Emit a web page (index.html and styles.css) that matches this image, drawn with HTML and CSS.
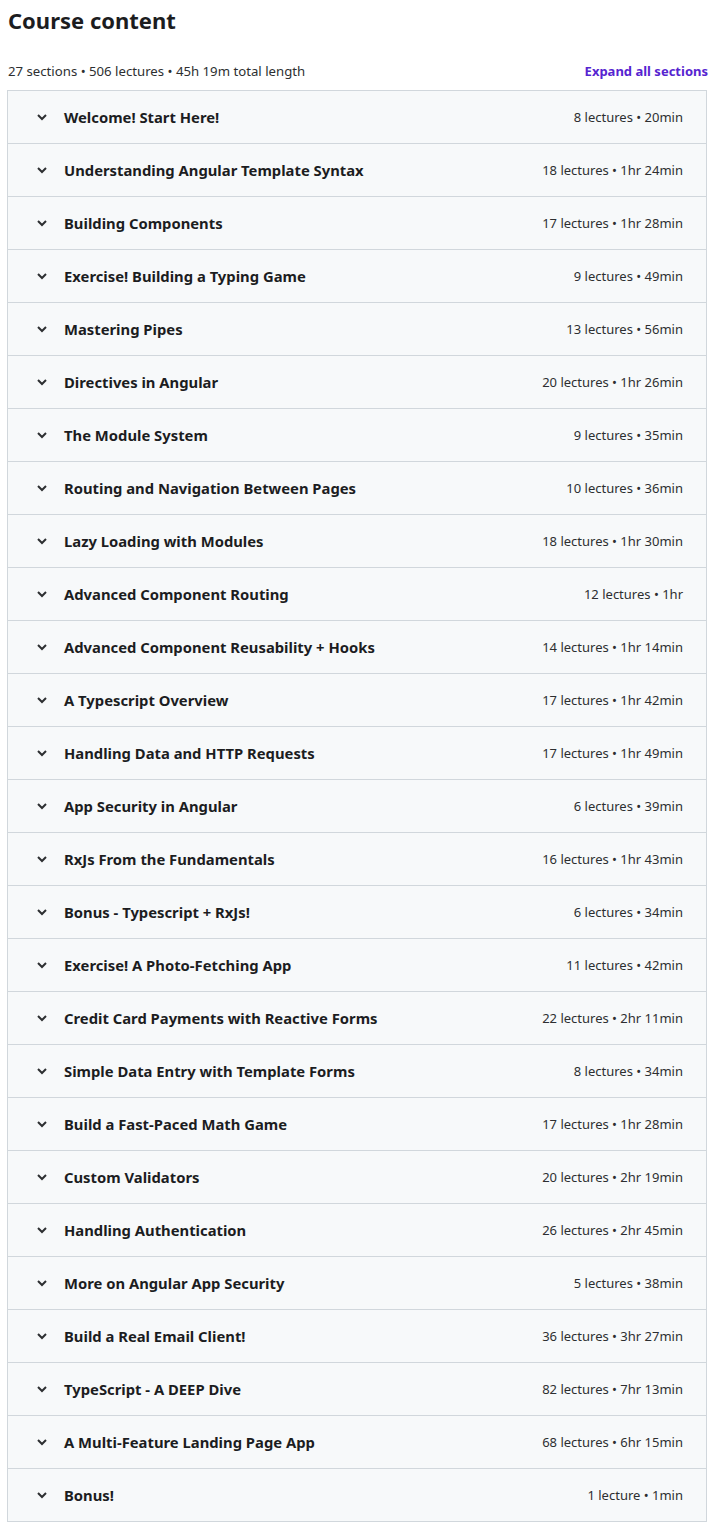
FILE: index.html
```html
<!DOCTYPE html>
<html lang="en">
<head>
    <meta charset="UTF-8">
    <title>Course content</title>
    <link rel="stylesheet" href="styles.css">
</head>
<body>
    <div class="curriculum">
        <h2 class="curriculum-title">Course content</h2>
        <div class="curriculum-summary">
            <span>27 sections • 506 lectures • 45h 19m total length</span>
            <a href="#" class="expand-link">Expand all sections</a>
        </div>
        <div class="section-list" id="section-list"></div>
    </div>
    <script>
        const sections = [
            ['Welcome! Start Here!', '8 lectures • 20min'],
            ['Understanding Angular Template Syntax', '18 lectures • 1hr 24min'],
            ['Building Components', '17 lectures • 1hr 28min'],
            ['Exercise! Building a Typing Game', '9 lectures • 49min'],
            ['Mastering Pipes', '13 lectures • 56min'],
            ['Directives in Angular', '20 lectures • 1hr 26min'],
            ['The Module System', '9 lectures • 35min'],
            ['Routing and Navigation Between Pages', '10 lectures • 36min'],
            ['Lazy Loading with Modules', '18 lectures • 1hr 30min'],
            ['Advanced Component Routing', '12 lectures • 1hr'],
            ['Advanced Component Reusability + Hooks', '14 lectures • 1hr 14min'],
            ['A Typescript Overview', '17 lectures • 1hr 42min'],
            ['Handling Data and HTTP Requests', '17 lectures • 1hr 49min'],
            ['App Security in Angular', '6 lectures • 39min'],
            ['RxJs From the Fundamentals', '16 lectures • 1hr 43min'],
            ['Bonus - Typescript + RxJs!', '6 lectures • 34min'],
            ['Exercise! A Photo-Fetching App', '11 lectures • 42min'],
            ['Credit Card Payments with Reactive Forms', '22 lectures • 2hr 11min'],
            ['Simple Data Entry with Template Forms', '8 lectures • 34min'],
            ['Build a Fast-Paced Math Game', '17 lectures • 1hr 28min'],
            ['Custom Validators', '20 lectures • 2hr 19min'],
            ['Handling Authentication', '26 lectures • 2hr 45min'],
            ['More on Angular App Security', '5 lectures • 38min'],
            ['Build a Real Email Client!', '36 lectures • 3hr 27min'],
            ['TypeScript - A DEEP Dive', '82 lectures • 7hr 13min'],
            ['A Multi-Feature Landing Page App', '68 lectures • 6hr 15min'],
            ['Bonus!', '1 lecture • 1min']
        ];
        const list = document.getElementById('section-list');
        sections.forEach(([title, meta]) => {
            const row = document.createElement('div');
            row.className = 'section-row';
            row.innerHTML =
                '<svg class="chevron" width="12" height="12" viewBox="0 0 12 12">' +
                '<polyline points="2,4 6,8 10,4" fill="none" stroke="currentColor" stroke-width="2"/></svg>' +
                '<span class="section-title"></span>' +
                '<span class="section-meta"></span>';
            row.querySelector('.section-title').textContent = title;
            row.querySelector('.section-meta').textContent = meta;
            list.appendChild(row);
        });
    </script>
</body>
</html>
```

FILE: styles.css
```css
html, body {
    margin: 0;
    padding: 0;
    background: #fff;
}
body {
    font-family: 'Noto Sans', 'Open Sans', sans-serif;
    color: #2d2f31;
}
.curriculum {
    padding: 0 6px 0 7px;
}
.curriculum-title {
    font-size: 22px;
    font-weight: 700;
    line-height: 1.2;
    margin: 0;
    padding: 7px 0 0 1px;
    height: 51px;
    box-sizing: border-box;
    color: #1c1d1f;
}
.curriculum-summary {
    display: flex;
    justify-content: space-between;
    align-items: center;
    font-size: 13.2px;
    height: 39px;
    padding-left: 1px;
}
.expand-link {
    color: #5624d0;
    font-weight: 700;
    font-size: 13px;
    text-decoration: none;
    margin-right: -1px;
}
.section-list {
    border: 1px solid #d1d7dc;
    border-bottom: none;
    background: #f7f9fa;
}
.section-row {
    display: flex;
    align-items: center;
    height: 52px;
    border-bottom: 1px solid #d1d7dc;
    padding: 0 23px 0 28px;
}
.chevron {
    flex: none;
    color: #2d2f31;
    margin-right: 16px;
}
.section-title {
    flex: 1;
    font-size: 14.8px;
    font-weight: 700;
    color: #1c1d1f;
}
.section-meta {
    font-size: 13px;
}
```
